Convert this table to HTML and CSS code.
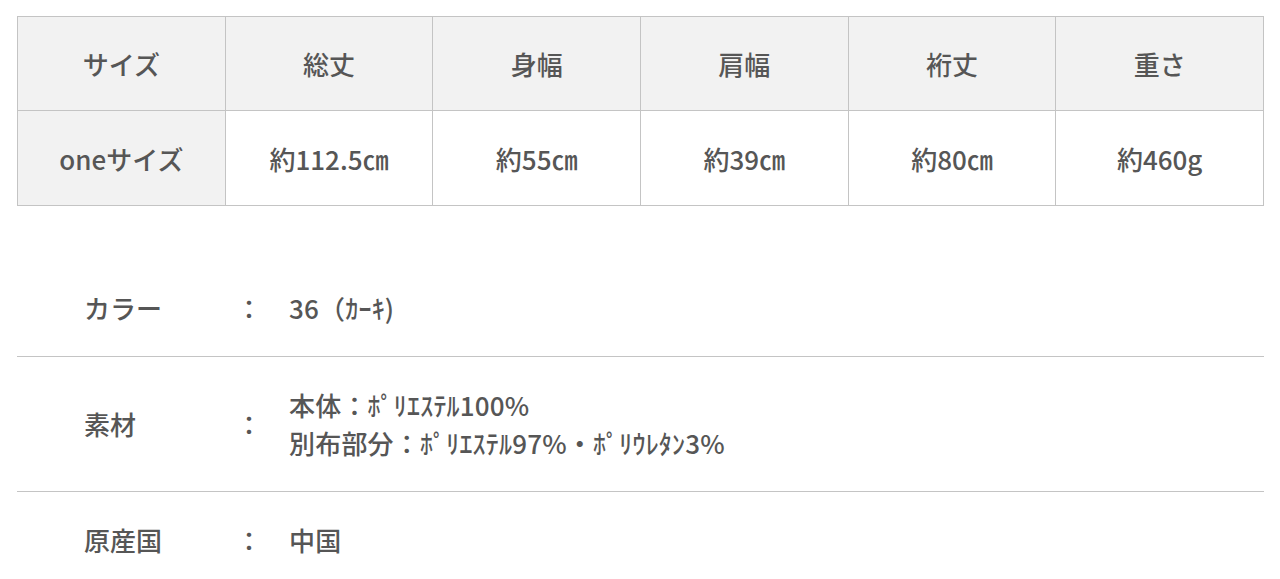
FILE: index.html
```html
<!DOCTYPE html>
<html lang="ja">
<head>
<meta charset="utf-8">
<link rel="stylesheet" href="styles.css">
</head>
<body>
<div class="page">
  <table class="size-table">
    <thead>
      <tr>
        <th class="head">サイズ</th>
        <th class="head">総丈</th>
        <th class="head">身幅</th>
        <th class="head">肩幅</th>
        <th class="head">裄丈</th>
        <th class="head">重さ</th>
      </tr>
    </thead>
    <tbody>
      <tr>
        <th class="head">oneサイズ</th>
        <td class="val">約112.5㎝</td>
        <td class="val">約55㎝</td>
        <td class="val">約39㎝</td>
        <td class="val">約80㎝</td>
        <td class="val">約460g</td>
      </tr>
    </tbody>
  </table>

  <div class="spec">
    <div class="spec-row">
      <div class="spec-label">カラー</div>
      <div class="spec-colon">：</div>
      <div class="spec-value">36（ｶｰｷ)</div>
    </div>
    <div class="spec-row">
      <div class="spec-label">素材</div>
      <div class="spec-colon">：</div>
      <div class="spec-value">本体：ﾎﾟﾘｴｽﾃﾙ100%<br>別布部分：ﾎﾟﾘｴｽﾃﾙ97%・ﾎﾟﾘｳﾚﾀﾝ3%</div>
    </div>
    <div class="spec-row">
      <div class="spec-label">原産国</div>
      <div class="spec-colon">：</div>
      <div class="spec-value">中国</div>
    </div>
  </div>
</div>
</body>
</html>
```

FILE: styles.css
```css
* { box-sizing: border-box; }
html, body { margin: 0; padding: 0; background: #fff; }
body {
  font-family: "Noto Sans CJK JP", "Noto Sans", sans-serif;
  color: #565656;
  font-weight: 500;
}
.page {
  padding: 16px 16px 0 17px;
}
.size-table {
  width: 100%;
  border-collapse: collapse;
  table-layout: fixed;
}
.size-table th, .size-table td {
  border: 1px solid #c4c4c4;
  text-align: center;
  vertical-align: middle;
  font-size: 26px;
  font-weight: 500;
  padding: 0;
}
.size-table thead th { height: 94px; }
.size-table tbody th, .size-table tbody td { height: 95px; }
.head { background: #f2f2f2; }
.val { background: #fff; }

.spec {
  margin-top: 54px;
}
.spec-row {
  display: grid;
  grid-template-columns: 152px 26px 1fr;
  align-items: center;
  padding: 29px 0 29px 67px;
  font-size: 26px;
  line-height: 38px;
  border-bottom: 1px solid #c4c4c4;
}
.spec-row:last-child { border-bottom: none; }
.spec-colon { text-align: center; }
.spec-value { padding-left: 27px; letter-spacing: 0.2px; }
```
